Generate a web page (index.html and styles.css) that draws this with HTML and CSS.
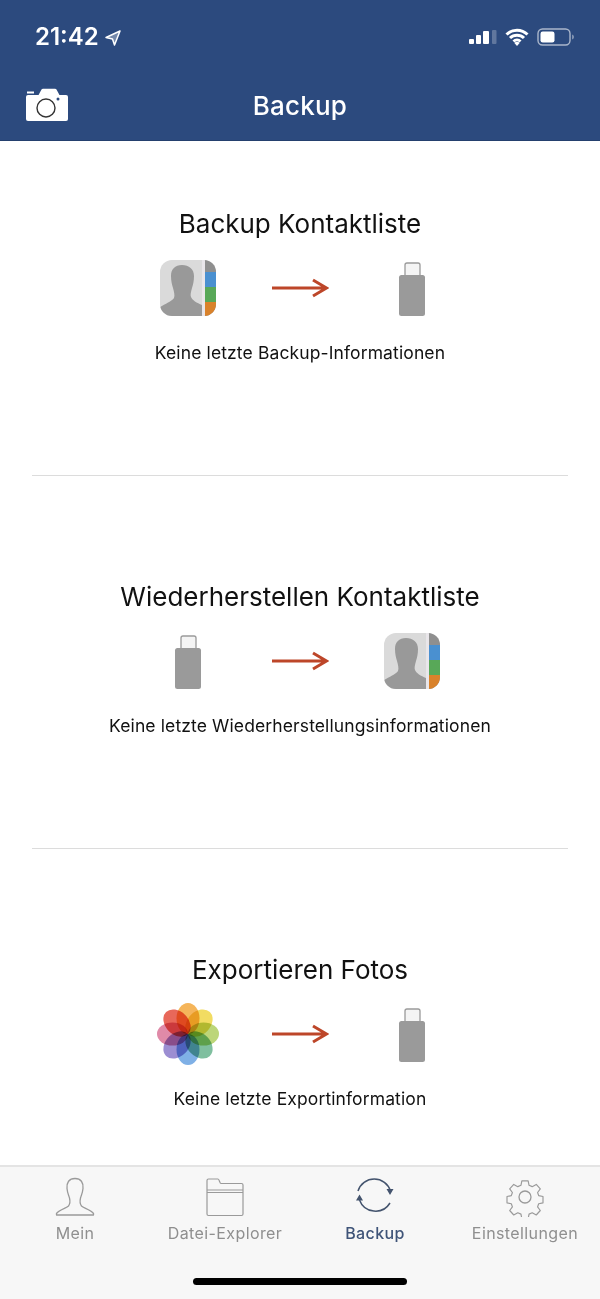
FILE: index.html
```html
<!DOCTYPE html>
<html lang="de">
<head>
<meta charset="utf-8">
<title>Backup</title>
<link rel="stylesheet" href="styles.css">
</head>
<body>
<svg class="defs" width="0" height="0" aria-hidden="true">
  <defs>
    <clipPath id="contact-clip"><rect x="0" y="0" width="56" height="56" rx="12"/></clipPath>
    <symbol id="contacts" viewBox="0 0 56 56">
      <g clip-path="url(#contact-clip)">
        <rect width="56" height="56" fill="#dadada"/>
        <rect x="44" width="12" height="56" fill="#8f8f8f"/>
        <rect x="42" width="3" height="56" fill="#e9e6ea"/>
        <rect x="45" y="12" width="11" height="15" fill="#4a90d0"/>
        <rect x="45" y="27" width="11" height="15" fill="#58a858"/>
        <rect x="45" y="42" width="11" height="14" fill="#d9822b"/>
        <path d="M22 5c7 0 12 4 12 11 0 5-1 9-2 12-1 4-2 7-1 9 1 3 6 6 11 8v11H0V47c5-3 12-6 14-9 1-3 0-6-1-10-1-3-2-7-2-12C11 9 15 5 22 5Z" fill="#999"/>
      </g>
    </symbol>
    <symbol id="usb" viewBox="0 0 28 56">
      <path d="M7 16V5a2 2 0 0 1 2-2h11a2 2 0 0 1 2 2v11" fill="#f4f4f4" stroke="#9a9a9a" stroke-width="1.300"/>
      <rect x="1" y="15" width="26" height="41" rx="2.500" fill="#9a9a9a"/>
    </symbol>
    <symbol id="arrow" viewBox="0 0 58 24">
      <path d="M1 12H55M42 4 55.500 12 42 20" fill="none" stroke="#bd4629" stroke-width="3"/>
    </symbol>
  </defs>
</svg>

<div class="app">
  <header class="topbar">
    <div class="status">
      <div class="status-left">
        <span class="time">21:42</span>
        <svg class="loc" viewBox="0 0 16 16"><path d="M15 1 1 7.500l6.500 1.500L9.500 15Z" fill="#fff" fill-opacity=".35" stroke="#fff" stroke-width="1.500" stroke-linejoin="round"/></svg>
      </div>
      <div class="status-right">
        <svg class="signal" viewBox="0 0 28 16">
          <rect x="0" y="10" width="5" height="5" rx="1" fill="#fff"/>
          <rect x="7" y="6" width="5" height="9" rx="1" fill="#fff"/>
          <rect x="14" y="2" width="6" height="13" rx="1" fill="#fff"/>
          <rect x="23" y="1" width="4.500" height="14" rx="1" fill="#fff" fill-opacity=".25"/>
        </svg>
        <svg class="wifi" viewBox="0 0 24 18">
          <path d="M1.500 6.500a15 15 0 0 1 21 0M5 10a10 10 0 0 1 14 0M8.500 13.500a5 5 0 0 1 7 0" fill="none" stroke="#fff" stroke-width="3"/>
          <path d="M12 18l-2.600-3a3.500 3.500 0 0 1 5.200 0Z" fill="#fff"/>
        </svg>
        <svg class="battery" viewBox="0 0 38 18">
          <rect x="1" y="1" width="32" height="16" rx="4.500" fill="none" stroke="#fff" stroke-opacity=".6" stroke-width="1.400"/>
          <rect x="3.500" y="3.500" width="14" height="11" rx="2.200" fill="#fff"/>
          <path d="M35 6.500c1.500.5 2 1.500 2 2.500s-.5 2-2 2.500Z" fill="#fff" fill-opacity=".4"/>
        </svg>
      </div>
    </div>
    <div class="nav">
      <svg class="camera" viewBox="0 0 44 36">
        <path d="M2 5.500h7v2H2ZM13 10l3.500-6.500q.5-.8 1.500-.8h12q1 0 1.500.8L35 10Z" fill="#fff"/>
        <rect x="1" y="9" width="42" height="26" rx="2" fill="#fff"/>
        <circle cx="21" cy="22" r="9" fill="none" stroke="#333" stroke-width="1.400"/>
        <circle cx="33" cy="13" r="1.500" fill="#2c4a7e"/>
      </svg>
      <h1 class="nav-title">Backup</h1>
    </div>
  </header>

  <main class="content">
    <section class="block">
      <h2 class="block-title">Backup Kontaktliste</h2>
      <div class="flow">
        <div class="cell"><svg class="ic-contacts"><use href="#contacts"/></svg></div>
        <div class="cell"><svg class="ic-arrow"><use href="#arrow"/></svg></div>
        <div class="cell"><svg class="ic-usb"><use href="#usb"/></svg></div>
      </div>
      <p class="block-note">Keine letzte Backup-Informationen</p>
    </section>
    <section class="block">
      <h2 class="block-title">Wiederherstellen Kontaktliste</h2>
      <div class="flow">
        <div class="cell"><svg class="ic-usb"><use href="#usb"/></svg></div>
        <div class="cell"><svg class="ic-arrow"><use href="#arrow"/></svg></div>
        <div class="cell"><svg class="ic-contacts"><use href="#contacts"/></svg></div>
      </div>
      <p class="block-note">Keine letzte Wiederherstellungsinformationen</p>
    </section>
    <section class="block">
      <h2 class="block-title">Exportieren Fotos</h2>
      <div class="flow">
        <div class="cell">
          <svg class="ic-photos" viewBox="0 0 64 64">
            <g class="petals">
              <ellipse class="petal" cx="32" cy="16.500" rx="11.500" ry="15.500" fill="#f5b55a"/>
              <ellipse class="petal" cx="32" cy="16.500" rx="11.500" ry="15.500" fill="#f2dc62" transform="rotate(45 32 32)"/>
              <ellipse class="petal" cx="32" cy="16.500" rx="11.500" ry="15.500" fill="#bcd679" transform="rotate(90 32 32)"/>
              <ellipse class="petal" cx="32" cy="16.500" rx="11.500" ry="15.500" fill="#7fbf9f" transform="rotate(135 32 32)"/>
              <ellipse class="petal" cx="32" cy="16.500" rx="11.500" ry="15.500" fill="#7fb0e6" transform="rotate(180 32 32)"/>
              <ellipse class="petal" cx="32" cy="16.500" rx="11.500" ry="15.500" fill="#9c8ed2" transform="rotate(225 32 32)"/>
              <ellipse class="petal" cx="32" cy="16.500" rx="11.500" ry="15.500" fill="#e08aa8" transform="rotate(270 32 32)"/>
              <ellipse class="petal" cx="32" cy="16.500" rx="11.500" ry="15.500" fill="#e8685a" transform="rotate(315 32 32)"/>
            </g>
          </svg>
        </div>
        <div class="cell"><svg class="ic-arrow"><use href="#arrow"/></svg></div>
        <div class="cell"><svg class="ic-usb"><use href="#usb"/></svg></div>
      </div>
      <p class="block-note">Keine letzte Exportinformation</p>
    </section>
  </main>

  <nav class="tabs">
    <div class="tab">
      <svg class="tab-icon" viewBox="0 0 40 40"><path d="M20 1.500c-6 0-8.500 4-8 10 .3 4 1.800 7 2.500 9.500.7 3 .5 6-1 8-2 2-9 3.500-12 7.500v1.500h37V36.500c-3-4-10-5.500-12-7.500-1.500-2-1.700-5-1-8 .7-2.500 2.200-5.500 2.500-9.500.5-6-2-10-8-10Z" fill="none" stroke="#9a9a9a" stroke-width="1.300" stroke-linejoin="round"/></svg>
      <span class="tab-label">Mein</span>
    </div>
    <div class="tab">
      <svg class="tab-icon" viewBox="0 0 40 40"><path d="M2 13V3.500A1.500 1.500 0 0 1 3.500 2h9.500c1.500 0 1.500 4.500 3 4.500h20.500A1.500 1.500 0 0 1 38 8v29a1.500 1.500 0 0 1-1.500 1.500h-33A1.500 1.500 0 0 1 2 37V13h36M2 15.500h36" fill="none" stroke="#9a9a9a" stroke-width="1.200"/></svg>
      <span class="tab-label">Datei-Explorer</span>
    </div>
    <div class="tab tab-active">
      <svg class="tab-icon" viewBox="0 0 40 40">
        <path d="M3 14A17 17 0 0 1 35.500 14M4.500 23A17 17 0 0 0 35 26" fill="none" stroke="#44546e" stroke-width="1.500"/>
        <path d="M31.500 12h7l-3.500 6ZM1 23.500l3.500-6 3.500 6Z" fill="#44546e"/>
      </svg>
      <span class="tab-label">Backup</span>
    </div>
    <div class="tab">
      <svg class="tab-icon" viewBox="0 0 40 40">
        <path d="M16.500 2h7l1 5 3.500 1.500 4.500-2.500 4.500 5-3 4 1.200 3.500 4.800 1v7l-4.800 1-1.200 3.500 3 4-4.500 5-4.500-2.500-3.500 1.500-1 5h-7l-1-5-3.500-1.500-4.500 2.500-4.500-5 3-4-1.200-3.500-4.800-1v-7l4.800-1 1.200-3.500-3-4 4.500-5 4.500 2.500 3.500-1.500Z" fill="none" stroke="#9a9a9a" stroke-width="1.300" stroke-linejoin="round" transform="translate(2 2) scale(.9)"/>
        <circle cx="20" cy="20" r="6" fill="none" stroke="#9a9a9a" stroke-width="1.300"/>
      </svg>
      <span class="tab-label">Einstellungen</span>
    </div>
    <div class="home-bar"></div>
  </nav>
</div>
</body>
</html>
```

FILE: styles.css
```css
* { box-sizing: border-box; }
html, body { margin: 0; padding: 0; background: #fff; }
body { font-family: Inter, "Liberation Sans", sans-serif; color: #111; overflow: hidden; }
.defs { position: absolute; }

.app { height: 1299px; display: flex; flex-direction: column; }

.topbar { height: 141px; flex: none; background: #2c4a7e; color: #fff; border-bottom: 1px solid #24406e; }
.status { height: 73px; display: flex; justify-content: space-between; align-items: center; padding: 0 25px 0 35px; }
.status-left { display: flex; align-items: center; gap: 6px; }
.time { font-size: 24px; font-weight: 600; }
.loc { width: 16px; height: 16px; margin-top: 3px; }
.status-right { display: flex; align-items: center; gap: 8px; }
.signal { width: 28px; height: 16px; }
.wifi { width: 24px; height: 18px; }
.battery { width: 38px; height: 18px; }

.nav { height: 67px; display: flex; align-items: center; justify-content: center; position: relative; }
.nav-title { margin: 0; font-size: 26px; font-weight: 500; line-height: 1; letter-spacing: .2px; position: relative; top: -1px; }
.camera { position: absolute; left: 25px; top: 13px; width: 44px; height: 36px; }

.content { flex: 1; min-height: 0; display: flex; flex-direction: column; }
.block { height: 372.5px; padding-top: 103px; border-bottom: 1px solid #dcdcdc; margin: 0 32px; display: flex; flex-direction: column; align-items: center; }
.block:first-child { height: 335px; padding-top: 65px; }
.block:last-child { flex: 1; height: auto; min-height: 0; border-bottom: 0; }
.block-title { margin: 0; font-size: 26px; font-weight: 400; line-height: 36px; white-space: nowrap; }
.flow { display: flex; justify-content: center; margin-top: 16px; height: 60px; }
.cell { width: 112px; display: flex; align-items: center; justify-content: center; }
.block-note { margin: 23px 0 0; font-size: 17.5px; line-height: 24px; letter-spacing: .12px; white-space: nowrap; }
.ic-contacts { width: 56px; height: 56px; }
.ic-usb { width: 28px; height: 56px; }
.ic-arrow { width: 58px; height: 24px; }
.ic-photos { width: 64px; height: 64px; flex: none; }
.petals { isolation: isolate; }
.petal { mix-blend-mode: multiply; }

.tabs { height: 134px; flex: none; background: #f7f7f7; border-top: 2px solid #e4e4e4; display: grid; grid-template-columns: repeat(4, 1fr); position: relative; padding-top: 10px; align-items: start; }
.tab { display: flex; flex-direction: column; align-items: center; color: #8f8f8f; }
.tab-icon { width: 40px; height: 40px; }
.tab-label { margin-top: 6px; font-size: 16px; line-height: 20px; letter-spacing: .4px; white-space: nowrap; }
.tab-active { color: #3f5478; }
.tab-active .tab-label { font-weight: 500; }
.home-bar { position: absolute; left: 193px; top: 111px; width: 214px; height: 7px; border-radius: 4px; background: #000; }
```
